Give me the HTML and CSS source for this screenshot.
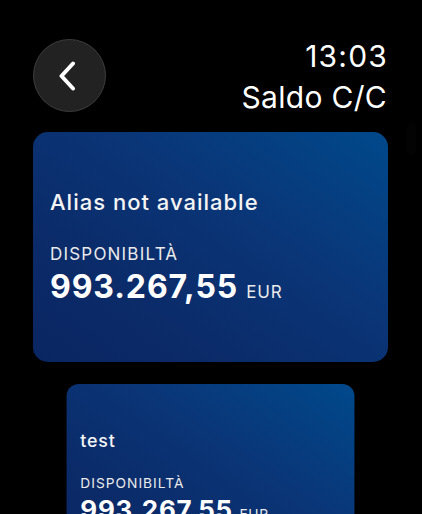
FILE: index.html
```html
<!DOCTYPE html>
<html lang="it">
<head>
<meta charset="utf-8">
<title>Saldo C/C</title>
<link rel="stylesheet" href="styles.css">
</head>
<body>
<div class="screen">
  <header class="header">
    <button class="back" aria-label="Indietro">
      <svg width="20" height="30" viewBox="0 0 20 30" aria-hidden="true">
        <path d="M15 2.5 L3.5 15 L15 27.5" fill="none" stroke="#fff" stroke-width="4" stroke-linecap="round" stroke-linejoin="round"/>
      </svg>
    </button>
    <div class="titles">
      <div class="time">13:03</div>
      <div class="title">Saldo C/C</div>
    </div>
  </header>
  <div class="scroll-ind"></div>
  <main class="list">
    <section class="card">
      <div class="alias">Alias not available</div>
      <div class="label">DISPONIBILTÀ</div>
      <div class="amount"><span class="value">993.267,55</span><span class="cur">EUR</span></div>
    </section>
    <section class="card card-small">
      <div class="alias">test</div>
      <div class="label">DISPONIBILTÀ</div>
      <div class="amount"><span class="value">993.267,55</span><span class="cur">EUR</span></div>
    </section>
  </main>
</div>
</body>
</html>
```

FILE: styles.css
```css
html, body {
  margin: 0;
  padding: 0;
  background: #000;
  height: 100%;
  overflow: hidden;
}
body {
  font-family: Inter, "Noto Sans", sans-serif;
  color: #fff;
}
.screen {
  position: relative;
  width: 422px;
  height: 514px;
  overflow: hidden;
}
.header {
  display: flex;
  justify-content: space-between;
  align-items: flex-start;
  padding: 36px 35px 0 33px;
  height: 97px;
  box-sizing: border-box;
}
.back {
  width: 73px;
  height: 73px;
  margin: 3px 0 0 0;
  border-radius: 50%;
  background: #222222;
  border: 1.5px solid #3d3d3d;
  display: flex;
  align-items: center;
  justify-content: center;
  padding: 0 4px 0 0;
}
.titles {
  text-align: right;
}
.time, .title {
  font-size: 30px;
  line-height: 41px;
  font-weight: 400;
}
.time {
  letter-spacing: 1.2px;
  margin-right: -1px;
}
.title {
  letter-spacing: 0.3px;
}
.scroll-ind {
  position: absolute;
  left: 407px;
  top: 123px;
  width: 9px;
  height: 32px;
  border-radius: 5px;
  background: #030303;
}
.list {
  display: flex;
  flex-direction: column;
  align-items: center;
  gap: 22px;
  padding-top: 35px;
}
.card {
  width: 355px;
  height: 230px;
  box-sizing: border-box;
  border-radius: 15px;
  background: linear-gradient(215deg, #00498b 0%, #0a3577 40%, #0b2a68 75%, #0a2662 100%);
  padding: 57px 17px 0;
  display: flex;
  flex-direction: column;
  margin-left: -1px;
}
.card-small {
  transform: scale(0.811);
  transform-origin: top center;
}
.alias {
  font-size: 22px;
  font-weight: 500;
  letter-spacing: 1px;
  line-height: 26px;
  color: #f4f4f4;
}
.label {
  font-size: 17px;
  font-weight: 400;
  letter-spacing: 1.2px;
  line-height: 20px;
  margin-top: 29px;
  color: #eaeaea;
}
.amount {
  display: flex;
  align-items: baseline;
  gap: 8px;
  margin-top: 5px;
}
.value {
  font-size: 32px;
  font-weight: 700;
  line-height: 36px;
  letter-spacing: 0.9px;
}
.cur {
  font-size: 17px;
  font-weight: 400;
  letter-spacing: 0.8px;
  color: #eaeaea;
}
```
